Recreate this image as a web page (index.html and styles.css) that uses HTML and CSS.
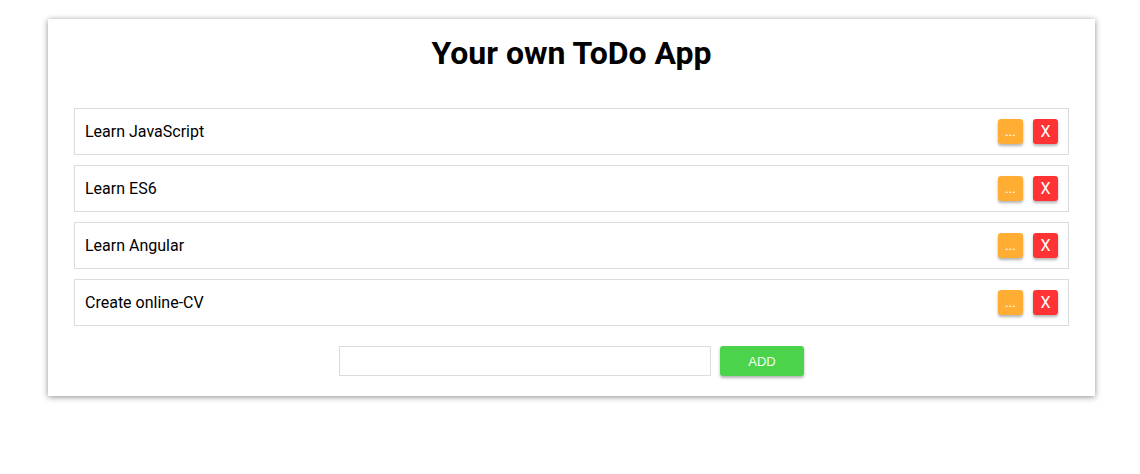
FILE: index.html
```html
<!DOCTYPE html>
<html>
<head>
<meta charset="utf-8">
<link rel="stylesheet" href="styles.css">
</head>
<body>
<div class="page">
<div class="card">
  <h1 class="title">Your own ToDo App</h1>
  <ul class="list">
    <li class="item"><span class="text">Learn JavaScript</span><div class="actions"><button class="btn edit">...</button><button class="btn del">X</button></div></li>
    <li class="item"><span class="text">Learn ES6</span><div class="actions"><button class="btn edit">...</button><button class="btn del">X</button></div></li>
    <li class="item"><span class="text">Learn Angular</span><div class="actions"><button class="btn edit">...</button><button class="btn del">X</button></div></li>
    <li class="item"><span class="text">Create online-CV</span><div class="actions"><button class="btn edit">...</button><button class="btn del">X</button></div></li>
  </ul>
  <div class="add-row">
    <input class="add-input" type="text">
    <button class="add-btn">ADD</button>
  </div>
</div>
</div>
</body>
</html>
```
FILE: styles.css
```css
html, body {
  margin: 0;
  padding: 0;
  background: #fff;
}
body {
  font-family: Roboto, "Liberation Sans", sans-serif;
  color: #000;
}
.page {
  padding: 19px 0 60px 48px;
}
.card {
  box-sizing: border-box;
  width: 1047px;
  padding: 16px 26px 20px;
  background: #fff;
  box-shadow: 0 1px 6px rgba(0, 0, 0, 0.45);
}
.title {
  margin: 0 0 36px;
  font-size: 32px;
  font-weight: 700;
  text-align: center;
  line-height: 37px;
}
.list {
  list-style: none;
  margin: 0;
  padding: 0;
  display: flex;
  flex-direction: column;
  gap: 10px;
}
.item {
  display: flex;
  align-items: center;
  justify-content: space-between;
  height: 47px;
  box-sizing: border-box;
  padding: 0 10px;
  border: 1px solid #dcdcdc;
  font-size: 16px;
}
.actions {
  display: flex;
  gap: 10px;
}
.btn {
  width: 25px;
  height: 25px;
  padding: 0;
  border: none;
  border-radius: 3px;
  color: #fff;
  font-family: Roboto, "Liberation Sans", sans-serif;
  line-height: 25px;
  box-shadow: 0 2px 3px rgba(0, 0, 0, 0.3);
}
.edit {
  background: #ffad33;
  font-size: 14px;
}
.del {
  background: #ff3333;
  font-size: 16px;
}
.add-row {
  display: flex;
  justify-content: center;
  gap: 9px;
  margin-top: 20px;
}
.add-input {
  box-sizing: border-box;
  width: 372px;
  height: 30px;
  margin: 0;
  border: 1px solid #dcdcdc;
  outline: none;
}
.add-btn {
  width: 84px;
  height: 30px;
  padding: 0;
  border: none;
  border-radius: 3px;
  background: #4cd34c;
  color: #f0fff0;
  font-family: "Liberation Sans", Arial, sans-serif;
  font-size: 13px;
  box-shadow: 0 2px 3px rgba(0, 0, 0, 0.3);
}
```
